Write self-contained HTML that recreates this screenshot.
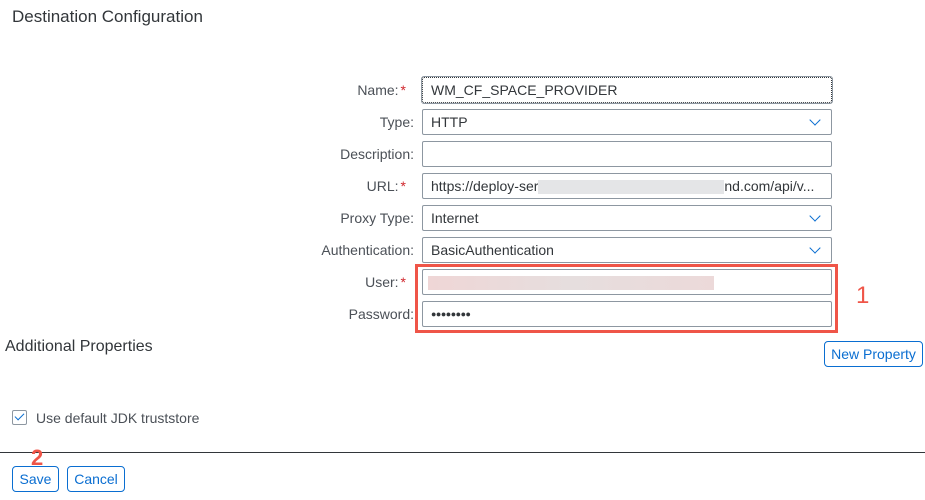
<!DOCTYPE html>
<html><head><style>
body{margin:0;width:925px;height:500px;background:#fff;font-family:"Liberation Sans",Arial,sans-serif;position:relative;overflow:hidden;color:#32363a}
.a{position:absolute}
.t{font-size:17px;color:#32363a}
.lbl{position:absolute;right:519px;font-size:14px;color:#4b5057;text-align:right;white-space:nowrap}
.star{color:#d0262c;margin-left:2px}
.in{position:absolute;left:422px;width:400px;height:24px;border:1px solid #8d97a1;border-radius:2px;font-size:14px;line-height:24px;padding-left:8px;box-sizing:content-box;color:#32363a;white-space:nowrap;overflow:hidden}
.chev{position:absolute;right:12px;top:6px;width:7px;height:7px;border-right:1.3px solid #0a6ed1;border-bottom:1.3px solid #0a6ed1;transform:rotate(45deg)}
.btn{position:absolute;border:1px solid #0a6ed1;border-radius:4px;color:#0a6ed1;font-size:14px;text-align:center;line-height:24px;height:24px}
</style></head><body>
<div class="a t" style="left:12px;top:7px">Destination Configuration</div>

<div class="lbl" style="top:82px">Name:<span class="star">*</span></div>
<div class="in" style="top:77px;border:1px dotted #32363a;outline:1px solid #8d97a1;">WM_CF_SPACE_PROVIDER</div>
<div class="lbl" style="top:114px;right:511px">Type:</div>
<div class="in" style="top:109px">HTTP<div class="chev"></div></div>
<div class="lbl" style="top:146px;right:511px">Description:</div>
<div class="in" style="top:141px"></div>
<div class="lbl" style="top:178px">URL:<span class="star">*</span></div>
<div class="in" style="top:173px">https://deploy-ser<span style="display:inline-block;width:186px;height:14px;background:#e4e5e7;vertical-align:middle"></span>nd.com/api/v...</div>
<div class="lbl" style="top:210px;right:511px">Proxy Type:</div>
<div class="in" style="top:205px">Internet<div class="chev"></div></div>
<div class="lbl" style="top:242px;right:511px">Authentication:</div>
<div class="in" style="top:237px">BasicAuthentication<div class="chev"></div></div>
<div class="lbl" style="top:274px">User:<span class="star">*</span></div>
<div class="in" style="top:269px"><span style="display:inline-block;width:286px;height:14px;background:linear-gradient(90deg,#efd6d6,#e6dede,#ecd9d9);vertical-align:middle;margin-left:-3px"></span></div>
<div class="lbl" style="top:306px;right:511px">Password:</div>
<div class="in" style="top:301px;font-size:9px;letter-spacing:-0.5px">●●●●●●●●</div>
<div class="a" style="left:415px;top:264px;width:417px;height:63px;border:3px solid #ef5548"></div>
<div class="a" style="left:856px;top:282px;font-size:24px;color:#ef5548">1</div>

<div class="a t" style="left:5px;top:338px;font-size:16px">Additional Properties</div>
<div class="btn" style="left:824px;top:341px;width:97px">New Property</div>

<div class="a" style="left:12px;top:410px;width:13px;height:13px;border:1px solid #8d97a1;border-radius:2px"></div>
<div class="a" style="left:17px;top:411px;width:4px;height:8px;border-right:1.5px solid #0a6ed1;border-bottom:1.5px solid #0a6ed1;transform:rotate(45deg)"></div>
<div class="a" style="left:36px;top:410px;font-size:14px;color:#4b5057">Use default JDK truststore</div>

<div class="a" style="left:0;top:452px;width:925px;height:1px;background:#32363a"></div>
<div class="a" style="left:31px;top:445px;font-size:22px;color:#ef5548;font-weight:bold">2</div>
<div class="btn" style="left:12px;top:466px;width:45px">Save</div>
<div class="btn" style="left:67px;top:466px;width:56px">Cancel</div>
</body></html>
